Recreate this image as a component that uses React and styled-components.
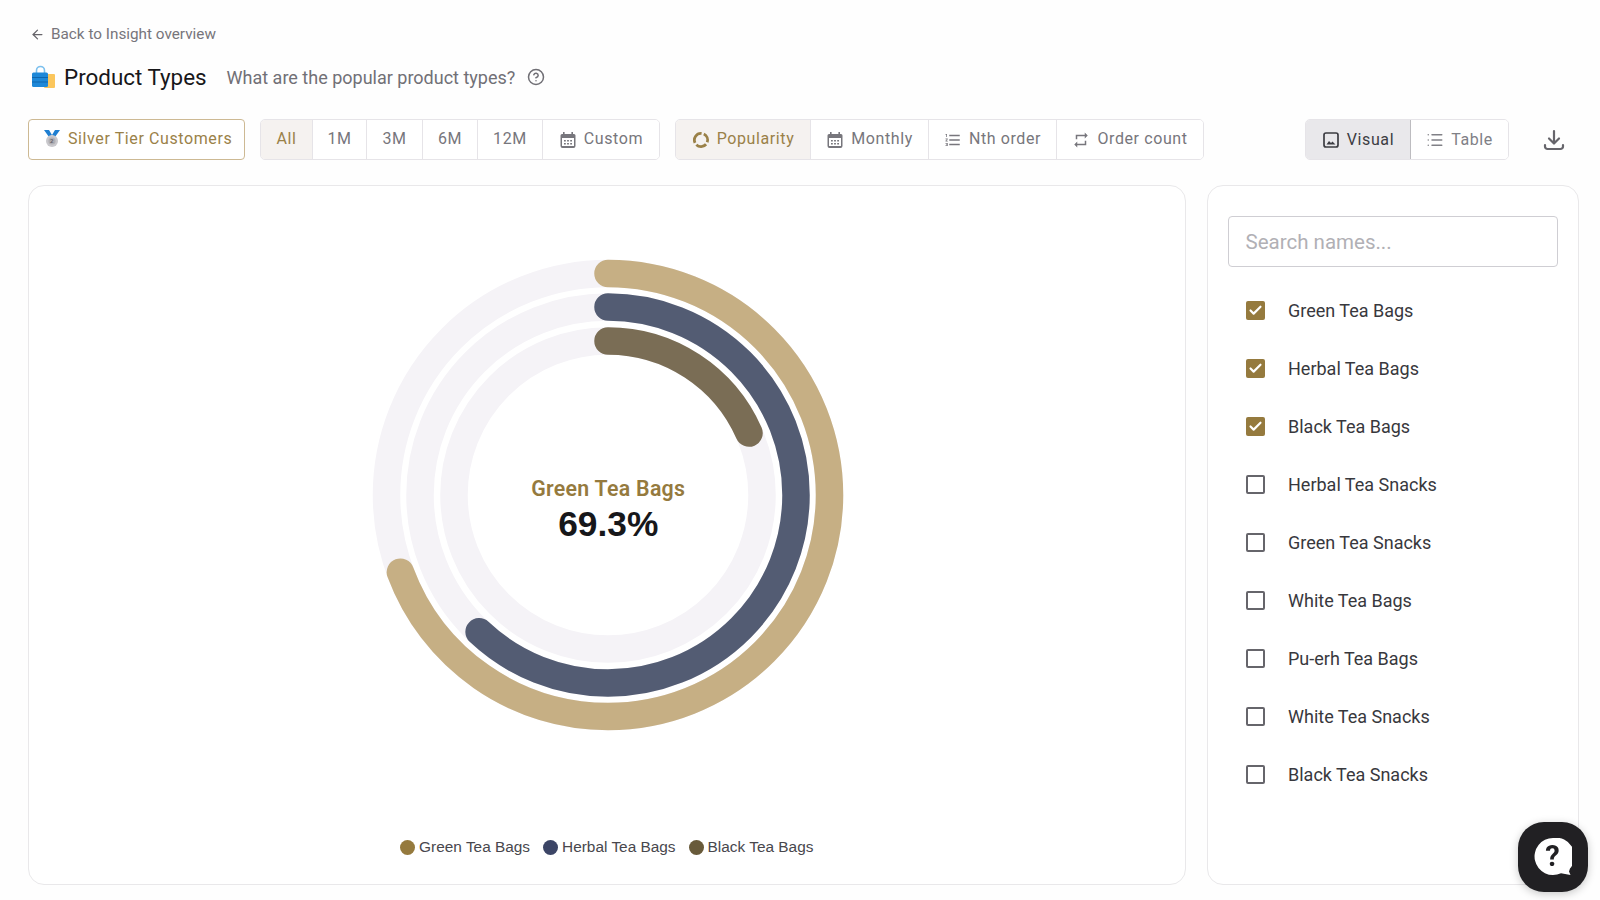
import React from 'react';
import styled, { createGlobalStyle } from 'styled-components';
import { ArrowLeft, CircleHelp, List, Check } from 'lucide-react';
import { MdFormatListNumbered, MdRepeat } from 'react-icons/md';

const GlobalStyle = createGlobalStyle`
  html, body { margin: 0; padding: 0; height: 100%; background: #fefefe; }
  body { font-family: Roboto, "Liberation Sans", sans-serif; overflow: hidden; }
  * { box-sizing: border-box; }
`;

const Page = styled.div`
  width: 1600px;
  height: 900px;
  padding: 24px 21px 15px 28px;
  display: flex;
  flex-direction: column;
`;

const BackLink = styled.a`
  display: flex;
  align-items: center;
  gap: 6px;
  height: 20px;
  margin-left: 2px;
  font-size: 15.3px;
  color: #77757b;
  svg { width: 15px; height: 15px; color: #66646a; }
`;

const TitleRow = styled.div`
  display: flex;
  align-items: center;
  height: 32px;
  margin-top: 17px;
  margin-left: 3px;
`;

const Title = styled.h1`
  margin: 0 0 0 9px;
  font-size: 22.4px;
  font-weight: 400;
  color: #17171a;
`;

const Question = styled.span`
  margin-left: 20px;
  font-size: 18px;
  color: #717076;
`;

const HelpIcon = styled(CircleHelp)`
  width: 18px;
  height: 18px;
  margin-left: 12px;
  color: #706f75;
`;

const Toolbar = styled.div`
  display: flex;
  align-items: center;
  height: 41px;
  margin-top: 26px;
`;

const TierButton = styled.button`
  display: flex;
  align-items: center;
  gap: 7px;
  height: 41px;
  width: 216.5px;
  margin-right: 15.5px;
  padding: 0 0 2px 14px;
  background: #fff;
  border: 1px solid #cdb993;
  border-radius: 4px;
  font: 400 16px Roboto, sans-serif;
  letter-spacing: 0.6px;
  color: #9a8148;
  white-space: nowrap;
`;

const Group = styled.div`
  display: flex;
  height: 41px;
  margin-right: ${p => p.$gap || 0}px;
  margin-left: ${p => p.$push ? 'auto' : '0'};
  border: 1px solid #e6e4e8;
  border-radius: 5px;
  overflow: hidden;
`;

const Segment = styled.button`
  display: flex;
  align-items: center;
  justify-content: center;
  gap: 7px;
  width: ${p => p.$w}px;
  padding: 0 0 2px;
  border: 0;
  border-right: 1px solid #e6e4e8;
  background: ${p => p.$active ? '#f5f2f0' : '#fff'};
  font: 400 16px Roboto, sans-serif;
  letter-spacing: 0.6px;
  color: ${p => p.$active ? '#9a8148' : '#77767c'};
  white-space: nowrap;
  &:last-child { border-right: 0; }
  svg { width: 18px; height: 18px; flex: none; margin-top: 2px; }
`;

const ViewSegment = styled(Segment)`
  padding: 0;
  background: ${p => p.$active ? '#e9e8eb' : '#fff'};
  border-right-color: ${p => p.$active ? '#bdbcc0' : '#e6e4e8'};
  color: ${p => p.$active ? '#3c3c42' : '#808086'};
  svg { margin-top: 0; }
`;

const DownloadButton = styled.button`
  display: flex;
  margin: 0 13px 0 33px;
  padding: 0;
  border: 0;
  background: none;
  color: #66656b;
`;

const Content = styled.div`
  flex: 1;
  display: flex;
  gap: 21px;
  margin-top: 25px;
  min-height: 0;
`;

const ChartCard = styled.section`
  width: 1157.5px;
  border: 1px solid #e9e8ea;
  border-radius: 16px;
  background: #fff;
  display: flex;
  flex-direction: column;
  align-items: center;
`;

const ChartWrap = styled.div`
  position: relative;
  width: 480px;
  height: 480px;
  margin-top: 69px;
  margin-left: 3px;
`;

const ChartLabel = styled.div`
  position: absolute;
  inset: 0;
  display: flex;
  flex-direction: column;
  align-items: center;
  justify-content: center;
  padding-top: 30px;
`;

const ChartName = styled.div`
  font-size: 21.3px;
  font-weight: 600;
  letter-spacing: 0.3px;
  color: #957a3e;
`;

const ChartValue = styled.div`
  margin-top: 3px;
  font: 700 35.3px "Liberation Sans", Arial, sans-serif;
  color: #17171a;
`;

const Legend = styled.div`
  display: flex;
  gap: 13px;
  margin-top: 103px;
`;

const LegendItem = styled.div`
  display: flex;
  align-items: center;
  gap: 4px;
  font: 15.4px "Liberation Sans", Arial, sans-serif;
  color: #48474d;
`;

const Dot = styled.span`
  width: 15px;
  height: 15px;
  border-radius: 50%;
  background: ${p => p.$color};
`;

const SidePanel = styled.aside`
  flex: 1;
  padding: 30px 20px 0;
  border: 1px solid #e9e8ea;
  border-radius: 16px;
  background: #fff;
`;

const SearchInput = styled.input`
  display: block;
  width: 100%;
  height: 51px;
  padding: 1px 17px 0;
  border: 1px solid #cfced3;
  border-radius: 4px;
  font: 400 20.5px Roboto, sans-serif;
  color: #333;
  &::placeholder { color: #b1b0b5; opacity: 1; }
`;

const NameList = styled.ul`
  list-style: none;
  margin: 15px 0 0;
  padding: 0;
`;

const NameRow = styled.li`
  display: flex;
  align-items: center;
  height: 57.9px;
  padding-left: 18.5px;
  font-size: 18px;
  color: #38383d;
`;

const Box = styled.span`
  display: flex;
  align-items: center;
  justify-content: center;
  width: 19px;
  height: 19px;
  margin-right: 23px;
  border-radius: 2px;
  border: ${p => p.$checked ? '0' : '2px solid #66656b'};
  background: ${p => p.$checked ? '#957a3e' : 'transparent'};
  color: #fff;
  svg { width: 15px; height: 15px; stroke-width: 3.4; }
`;

const Fab = styled.button`
  position: fixed;
  left: 1518px;
  top: 822px;
  width: 70px;
  height: 70px;
  padding: 0;
  border: 0;
  border-radius: 26px;
  background: #212023;
  box-shadow: 0 2px 8px rgba(0, 0, 0, 0.22);
  display: flex;
  align-items: center;
  justify-content: center;
`;

const rings = [
  { r: 221.5, pct: 69.3, color: '#c6af84' },
  { r: 188, pct: 62, color: '#535c73' },
  { r: 154, pct: 18.4, color: '#7a6d55' },
];

const legend = [
  { name: 'Green Tea Bags', color: '#957a3e' },
  { name: 'Herbal Tea Bags', color: '#3c4566' },
  { name: 'Black Tea Bags', color: '#685a3a' },
];

const names = [
  ['Green Tea Bags', true],
  ['Herbal Tea Bags', true],
  ['Black Tea Bags', true],
  ['Herbal Tea Snacks', false],
  ['Green Tea Snacks', false],
  ['White Tea Bags', false],
  ['Pu-erh Tea Bags', false],
  ['White Tea Snacks', false],
  ['Black Tea Snacks', false],
];

const BagIcon = () => (
  <svg width="24" height="24" viewBox="0 0 24 24">
    <rect x="13" y="9" width="11" height="14" rx="1" fill="#fbc65c" />
    <path d="M5.5 8V5.5a4 4 0 0 1 8 0V8" fill="none" stroke="#7cc0ee" strokeWidth="1.6" />
    <rect x="1" y="7.5" width="16" height="14.5" rx="1.5" fill="#1e88d8" />
    <path d="M1 12.5h16M1 17h16" stroke="#0f66ad" strokeWidth="1" />
  </svg>
);

const MedalIcon = () => (
  <svg width="18" height="19" viewBox="0 0 18 19">
    <path d="M1 1h5l3 5-3 2zM17 1h-5L9 6l3 2z" fill="#1f7fd1" />
    <circle cx="9" cy="12" r="6" fill="#c9c8cc" />
    <circle cx="9" cy="12" r="3.6" fill="#b0afb4" />
    <text x="9" y="14" fontSize="6" fontWeight="700" textAnchor="middle" fill="#66656b">2</text>
  </svg>
);

const CalendarIcon = () => (
  <svg viewBox="0 0 18 18" fill="currentColor">
    <path d="M4 1h1.6v2h6.8V1H14v2h1a1.5 1.5 0 0 1 1.5 1.5V15a2 2 0 0 1-2 2h-11a2 2 0 0 1-2-2V4.5A1.5 1.5 0 0 1 3 3h1zM3 7v8h12V7z" />
    <path d="M5 9h1.8v1.5H5zM8.1 9h1.8v1.5H8.1zM11.2 9H13v1.5h-1.8zM5 12h1.8v1.5H5zM8.1 12h1.8v1.5H8.1zM11.2 12H13v1.5h-1.8z" />
  </svg>
);

const PopularityIcon = () => (
  <svg viewBox="0 0 18 18" fill="none" stroke="currentColor" strokeWidth="2.8">
    <path d="M11.79 3.02A6.6 6.6 0 0 1 15.2 11.26" />
    <path d="M14.06 13.24A6.6 6.6 0 0 1 4.33 13.67" />
    <path d="M3.02 11.79A6.6 6.6 0 0 1 9.58 2.42" />
  </svg>
);

const ImageIcon = () => (
  <svg viewBox="0 0 18 18" fill="none" stroke="currentColor" strokeWidth="1.7">
    <rect x="2" y="2" width="14" height="14" rx="2" />
    <path d="M4.5 13.5l2.5-3.5 2 2 1.5-1.5 3 3z" fill="currentColor" stroke="none" />
  </svg>
);

const DownloadIcon = () => (
  <svg width="24" height="24" viewBox="0 0 24 24" fill="none" stroke="currentColor" strokeWidth="2.2" strokeLinecap="round" strokeLinejoin="round">
    <path d="M12 3v12M7 10.5l5 5 5-5" />
    <path d="M3 17v1.5A2.5 2.5 0 0 0 5.5 21h13a2.5 2.5 0 0 0 2.5-2.5V17" />
  </svg>
);

const ChatHelpIcon = () => (
  <svg width="38" height="38" viewBox="0 0 38 38">
    <path d="M19 0a18.5 18.5 0 1 0 8 35.2l9.5 1.8-1.500-3.500 1-3A18.5 18.5 0 0 0 19 0z" fill="#fff" />
    <text x="18.5" y="28" fontSize="29" fontWeight="700" textAnchor="middle" fontFamily="Roboto, sans-serif" fill="#212023">?</text>
  </svg>
);

const arcLength = r => 2 * Math.PI * r;

const RingChart = () => (
  <svg width="480" height="480" viewBox="0 0 480 480">
    {rings.map(ring => (
      <g key={ring.r} fill="none" strokeWidth="27.5">
        <circle cx="240" cy="240" r={ring.r} stroke="#f5f3f7" />
        <circle
          cx="240"
          cy="240"
          r={ring.r}
          stroke={ring.color}
          strokeLinecap="round"
          strokeDasharray={`${arcLength(ring.r) * ring.pct / 100} ${arcLength(ring.r)}`}
          transform="rotate(-90 240 240)"
        />
      </g>
    ))}
  </svg>
);

export default function App() {
  return (
    <Page>
      <GlobalStyle />
      <BackLink><ArrowLeft />Back to Insight overview</BackLink>
      <TitleRow>
        <BagIcon />
        <Title>Product Types</Title>
        <Question>What are the popular product types?</Question>
        <HelpIcon />
      </TitleRow>
      <Toolbar>
        <TierButton><MedalIcon />Silver Tier Customers</TierButton>
        <Group $gap={15}>
          <Segment $w={52} $active>All</Segment>
          <Segment $w={54}>1M</Segment>
          <Segment $w={56}>3M</Segment>
          <Segment $w={55}>6M</Segment>
          <Segment $w={65}>12M</Segment>
          <Segment $w={116}><CalendarIcon />Custom</Segment>
        </Group>
        <Group>
          <Segment $w={135} $active><PopularityIcon />Popularity</Segment>
          <Segment $w={118}><CalendarIcon />Monthly</Segment>
          <Segment $w={128}><MdFormatListNumbered />Nth order</Segment>
          <Segment $w={146}><MdRepeat />Order count</Segment>
        </Group>
        <Group $push>
          <ViewSegment $w={105} $active><ImageIcon />Visual</ViewSegment>
          <ViewSegment $w={97}><List />Table</ViewSegment>
        </Group>
        <DownloadButton><DownloadIcon /></DownloadButton>
      </Toolbar>
      <Content>
        <ChartCard>
          <ChartWrap>
            <RingChart />
            <ChartLabel>
              <ChartName>Green Tea Bags</ChartName>
              <ChartValue>69.3%</ChartValue>
            </ChartLabel>
          </ChartWrap>
          <Legend>
            {legend.map(item => (
              <LegendItem key={item.name}><Dot $color={item.color} />{item.name}</LegendItem>
            ))}
          </Legend>
        </ChartCard>
        <SidePanel>
          <SearchInput placeholder="Search names..." />
          <NameList>
            {names.map(([name, checked]) => (
              <NameRow key={name}>
                <Box $checked={checked}>{checked && <Check />}</Box>
                {name}
              </NameRow>
            ))}
          </NameList>
        </SidePanel>
      </Content>
      <Fab aria-label="Help"><ChatHelpIcon /></Fab>
    </Page>
  );
}
